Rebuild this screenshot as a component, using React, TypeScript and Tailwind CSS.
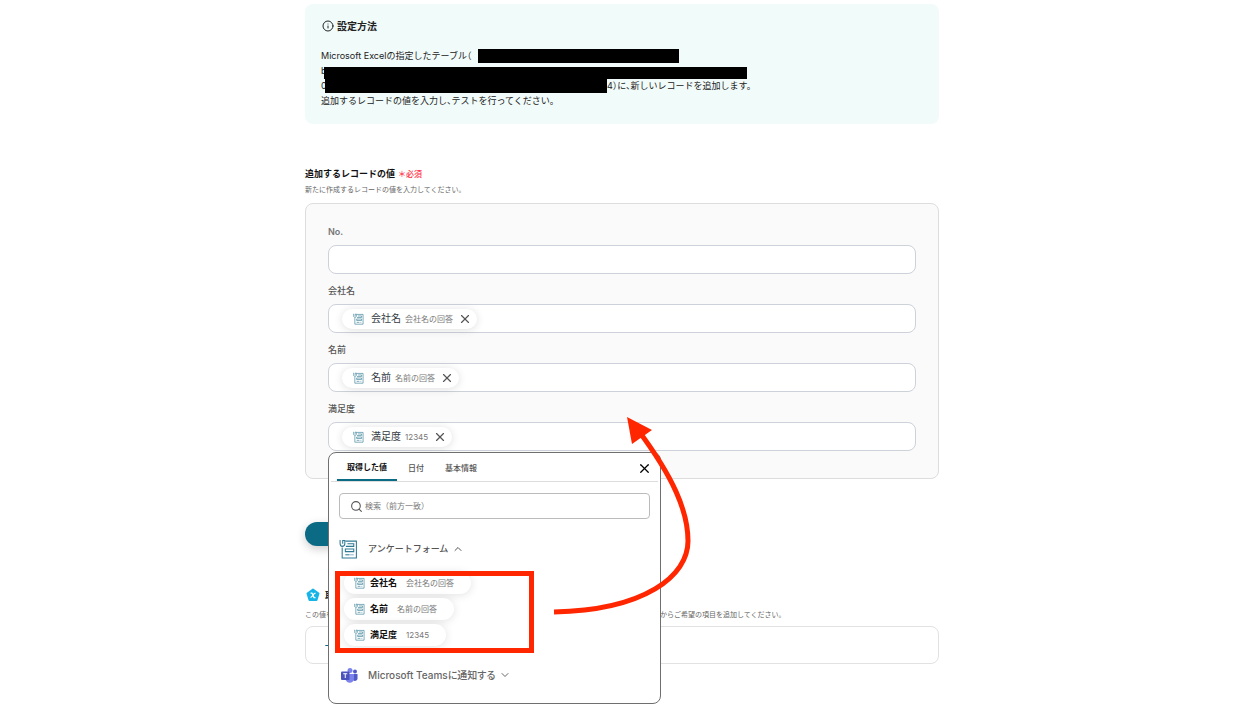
import { useState } from "react";
import { ChevronDown, ChevronUp, Info, Plus, Search, X } from "lucide-react";

type Value = { id: string; name: string; sample: string };

const values: Value[] = [
  { id: "company", name: "会社名", sample: "会社名の回答" },
  { id: "person", name: "名前", sample: "名前の回答" },
  { id: "rating", name: "満足度", sample: "12345" },
];

const tabs = ["取得した値", "日付", "基本情報"];

function FormIcon({ className }: { className: string }) {
  return (
    <svg viewBox="0 0 36 38" fill="none" stroke="#2f7a93" strokeWidth="2" className={className} aria-hidden="true">
      <path d="M12 4H33V36H6V16" />
      <path d="M2 2V8Q2 14 6 14Q11 14 11 9V3H7V9" />
      <path d="M16 9H28V14H13" />
      <path d="M12 19H28V24H12Z" />
      <path d="M12 30H20" />
      <path d="M21 30H28" stroke="#8fb6c4" />
    </svg>
  );
}

function TeamsIcon() {
  return (
    <svg viewBox="0 0 34 30" className="h-[15px] w-[17px]" aria-hidden="true">
      <circle cx="28" cy="7" r="4" fill="#5059c9" />
      <circle cx="18" cy="5" r="5" fill="#7b83eb" />
      <path d="M24 12H33V21A5 5 0 0 1 24 24Z" fill="#5059c9" />
      <path d="M9 12H26V21A8 8 0 0 1 9 21Z" fill="#7b83eb" />
      <rect x="0" y="7" width="17" height="17" rx="2" fill="#4b53bc" />
      <path d="M4.500 11.500H12.500M8.500 11.500V20" stroke="#fff" strokeWidth="2" fill="none" />
    </svg>
  );
}

function PentagonIcon() {
  return (
    <svg viewBox="0 0 28 28" className="h-[14px] w-[14px]" aria-hidden="true">
      <path
        d="M14 3L25 11L21 24H7L3 11Z"
        fill="#16b5e8"
        stroke="#16b5e8"
        strokeWidth="4"
        strokeLinejoin="round"
      />
      <path d="M9 10H12L16 19H19M19 10Q16 11 14 14Q12 18 9 19" stroke="#fff" strokeWidth="2.5" fill="none" />
    </svg>
  );
}

function FieldChip({ value }: { value: Value }) {
  return (
    <span className="flex h-5 items-center rounded-full bg-white pl-[11px] pr-[5px] shadow-[0_1px_8px_rgba(0,0,0,0.13)]">
      <FormIcon className="h-3 w-[11px]" />
      <span className="ml-[7px] text-[10px] text-[#333b44]">{value.name}</span>
      <span className="ml-1 text-[8px] text-[#777]">{value.sample}</span>
      <button type="button" aria-label={`${value.name}を削除`} className="ml-[5px] text-[#555]">
        <X size={14} strokeWidth={2} />
      </button>
    </span>
  );
}

function Picker() {
  const [tab, setTab] = useState(0);
  return (
    <div className="absolute -left-px top-full z-10 mt-[2px] h-[252px] w-[333px] rounded-lg border border-[#6f6f6f] bg-white">
      <div className="mx-[2px] flex h-[29px] items-stretch gap-px border-b border-[#ddd] pl-[6px]">
        {tabs.map((name, i) => (
          <button
            key={name}
            type="button"
            onClick={() => setTab(i)}
            className={
              i === tab
                ? "border-b-2 border-[#0b6b84] px-[10px] pt-[2px] text-[8px] font-bold text-[#111]"
                : "px-[10px] pt-px text-[8px] font-medium text-[#555]"
            }
          >
            {name}
          </button>
        ))}
        <button type="button" aria-label="閉じる" className="ml-auto mr-[6px] pt-[2px] text-black">
          <X size={15} strokeWidth={2} />
        </button>
      </div>

      <label className="mx-[10px] mt-[11px] flex h-[26px] items-center gap-[2px] rounded border border-[#bbb] pl-[10px]">
        <Search size={13} strokeWidth={2} className="text-[#555]" />
        <input
          aria-label="検索"
          placeholder="検索（前方一致）"
          className="min-w-0 flex-1 bg-transparent text-[8px] outline-none [font-feature-settings:normal] placeholder:text-[#777]"
        />
      </label>

      <button
        type="button"
        className="mt-[20px] flex h-5 items-center pl-[10px] text-[9px] font-medium text-[#555]"
      >
        <FormIcon className="h-[20px] w-[19px]" />
        <span className="ml-[10px]">アンケートフォーム</span>
        <ChevronUp size={12} strokeWidth={2} className="ml-1" />
      </button>

      <div className="relative mt-[13px] flex flex-col items-start gap-1 pl-[15px]">
        {values.map((v) => (
          <button
            key={v.id}
            type="button"
            className="flex h-[22px] items-center rounded-full bg-white pl-[10px] pr-[17px] shadow-[0_1px_10px_rgba(0,0,0,0.12)]"
          >
            <FormIcon className="h-3 w-[11px]" />
            <span className="ml-[5px] text-[9px] font-bold text-[#111]">{v.name}</span>
            <span className="ml-[9px] text-[8px] text-[#777]">{v.sample}</span>
          </button>
        ))}
        <div className="pointer-events-none absolute -top-px left-[6px] h-[82px] w-[199px] border-[5px] border-[#ff2600]" />
      </div>

      <button type="button" className="mt-[19px] flex h-5 items-center pl-[12px] text-[10px] font-medium text-[#666]">
        <TeamsIcon />
        <span className="ml-[10px] [font-feature-settings:'palt']">Microsoft Teamsに通知する</span>
        <ChevronDown size={12} strokeWidth={2} className="ml-1" />
      </button>

      <svg
        viewBox="0 0 150 204"
        className="pointer-events-none absolute -top-[37px] left-[221px] h-[204px] w-[150px]"
        aria-hidden="true"
      >
        <path
          d="M4 196C95 194 138 160 138 125C138 95 123 61 88 14"
          fill="none"
          stroke="#ff2600"
          strokeWidth="5"
        />
        <path d="M77 1L102 14L82 28Z" fill="#ff2600" />
      </svg>
    </div>
  );
}

export default function App() {
  return (
    <div className="min-h-screen bg-white pr-[14px] font-['Inter','Noto_Sans_CJK_JP',sans-serif] text-[#222] [font-feature-settings:'halt']">
      <main className="mx-auto max-w-[634px] pb-10 pt-1">
        <section className="h-[120px] rounded-lg bg-[#f1fbfa] px-4 pt-[14px]">
          <h2 className="flex h-4 items-center gap-[3px] pl-px text-[10px] font-bold">
            <Info size={12} strokeWidth={2} />
            設定方法
          </h2>
          <div className="mt-[14px] whitespace-nowrap text-[9px] leading-[15px]">
            <p className="relative">
              Microsoft Excelの指定したテーブル（
              <span className="absolute left-[157px] top-px h-[14px] w-[201px] bg-black" />
            </p>
            <p className="relative">
              b
              <span className="absolute left-[3px] top-1 h-3 w-[423px] bg-black" />
            </p>
            <p className="relative flex">
              <span className="w-[286px]">0</span>
              <span>4）に、新しいレコードを追加します。</span>
              <span className="absolute left-1 top-px h-[14px] w-[282px] bg-black" />
            </p>
            <p>追加するレコードの値を入力し、テストを行ってください。</p>
          </div>
        </section>

        <section className="mt-[42px]">
          <h3 className="h-4 text-[9px] font-bold leading-4 text-[#111]">
            追加するレコードの値
            <span className="ml-[3px] text-[8px] font-medium text-[#ff2d3d]">＊必須</span>
          </h3>
          <p className="h-4 text-[7px] leading-4 text-[#666]">新たに作成するレコードの値を入力してください。</p>

          <div className="mt-[5px] rounded-lg border border-[#ddd] bg-[#fafafa] px-[22px] pb-[27px] pt-[20px]">
            <div className="flex flex-col gap-[9px]">
              <div>
                <label htmlFor="no" className="block text-[9px] font-semibold leading-4 text-[#777]">
                  No.
                </label>
                <input
                  id="no"
                  className="mt-[5px] block h-[29px] w-full rounded-lg border border-[#cdd1d9] bg-white px-3 text-[10px] outline-none"
                />
              </div>
              {values.map((v) => (
                <div key={v.id}>
                  <label htmlFor={v.id} className="block text-[9px] font-medium leading-4 text-[#555]">
                    {v.name}
                  </label>
                  <div className="relative mt-[5px] flex h-[29px] items-center rounded-lg border border-[#cdd1d9] bg-white px-[13px]">
                    <FieldChip value={v} />
                    <input id={v.id} className="min-w-0 flex-1 bg-transparent text-[10px] outline-none" />
                    {v.id === "rating" && <Picker />}
                  </div>
                </div>
              ))}
            </div>
          </div>
        </section>

        <button
          type="button"
          className="mt-[43px] block h-6 w-24 rounded-full bg-[#0b6b84] text-[10px] font-bold text-white shadow-[0_3px_10px_rgba(0,0,0,0.2)]"
        >
          テスト
        </button>

        <section className="mt-[41px]">
          <h3 className="flex h-4 items-center gap-[5px] pl-px text-[10px] font-bold">
            <PentagonIcon />
            取得した値
          </h3>
          <p className="mt-1 flex h-4 whitespace-nowrap text-[7px] leading-4 text-[#666]">
            <span className="w-[355px]">この値を</span>
            <span>からご希望の項目を追加してください。</span>
          </p>
          <div className="mt-[3px] flex h-[38px] items-center rounded-lg border border-[#e2e2e2] px-[17px]">
            <button type="button" aria-label="追加" className="text-[#0b6b84]">
              <Plus size={13} strokeWidth={2} />
            </button>
          </div>
        </section>
      </main>
    </div>
  );
}
